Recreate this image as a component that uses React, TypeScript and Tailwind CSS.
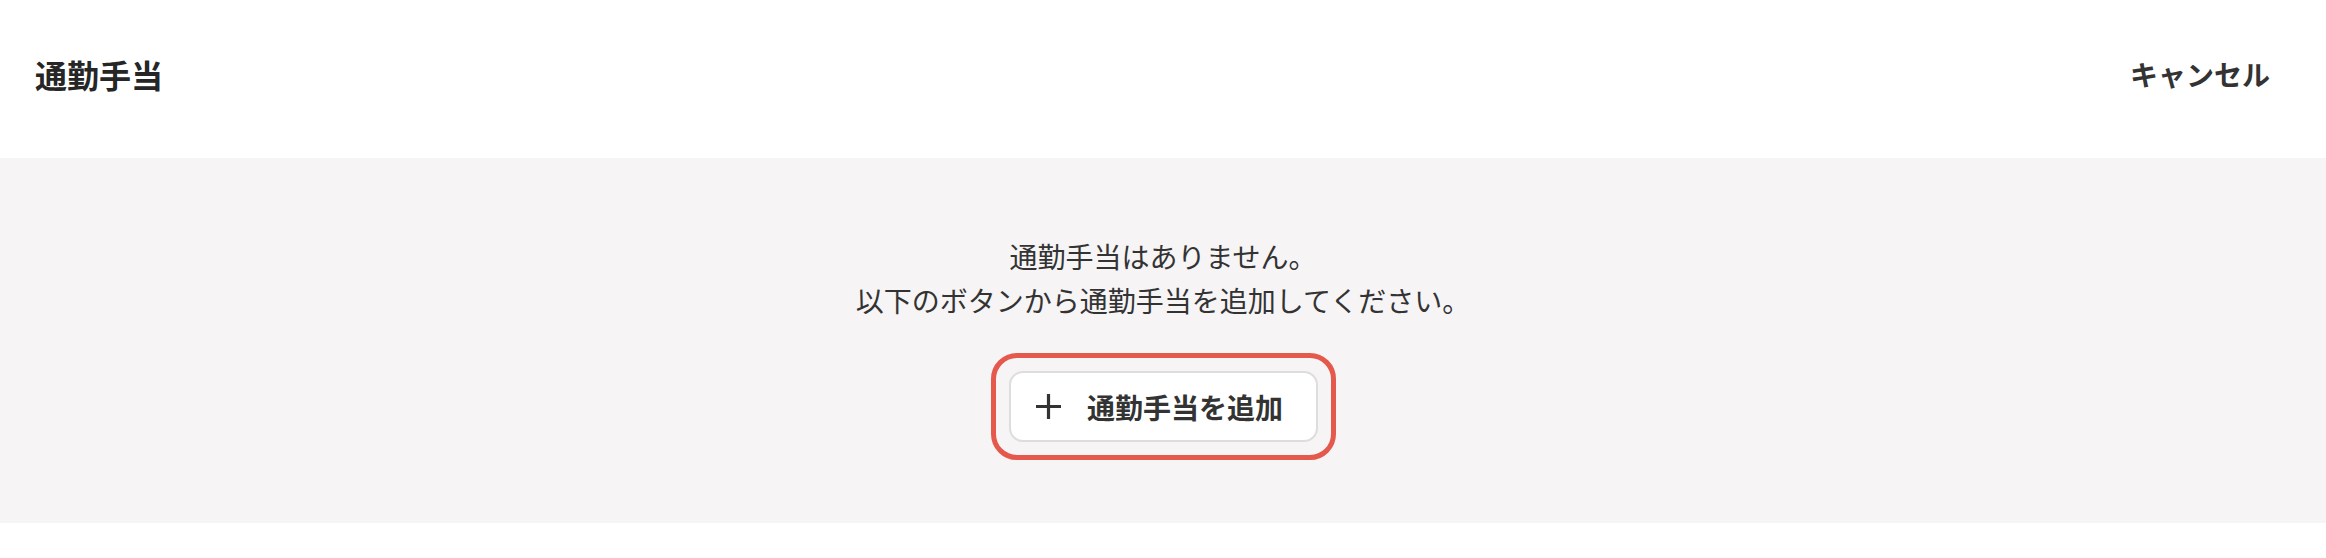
const font = { fontFamily: '"Noto Sans CJK JP", "Noto Sans", sans-serif' };

function PlusIcon() {
  return (
    <svg width="25" height="25" viewBox="0 0 25 25" fill="none" stroke="currentColor" strokeWidth="3.2">
      <path d="M12.5 0v25M0 12.5h25" />
    </svg>
  );
}

function Header() {
  return (
    <header className="flex h-[158px] items-center justify-between bg-white pb-[11px] pl-[35px] pr-[56px]">
      <h1 className="text-[32px] font-bold text-[#262626]">通勤手当</h1>
      <button className="text-[28px] font-bold text-[#333333]">キャンセル</button>
    </header>
  );
}

function EmptyState() {
  return (
    <section className="flex flex-col items-center bg-[#f6f4f5] pb-[63px] pt-[76px]">
      <div className="flex flex-col items-center text-[28px] leading-[44px] text-[#333333]">
        <p>通勤手当はありません。</p>
        <p>以下のボタンから通勤手当を追加してください。</p>
      </div>
      <div className="mt-[31px] rounded-[26px] border-[5px] border-[#e5584c] p-[13px]">
        <button className="flex h-[71px] w-[309px] items-center justify-center gap-[26px] rounded-[14px] border-2 border-[#dddddd] bg-white pr-[7px] text-[#333333]">
          <PlusIcon />
          <span className="text-[28px] font-bold">通勤手当を追加</span>
        </button>
      </div>
    </section>
  );
}

export default function App() {
  return (
    <div className="min-h-[558px] bg-white" style={font}>
      <Header />
      <EmptyState />
    </div>
  );
}
